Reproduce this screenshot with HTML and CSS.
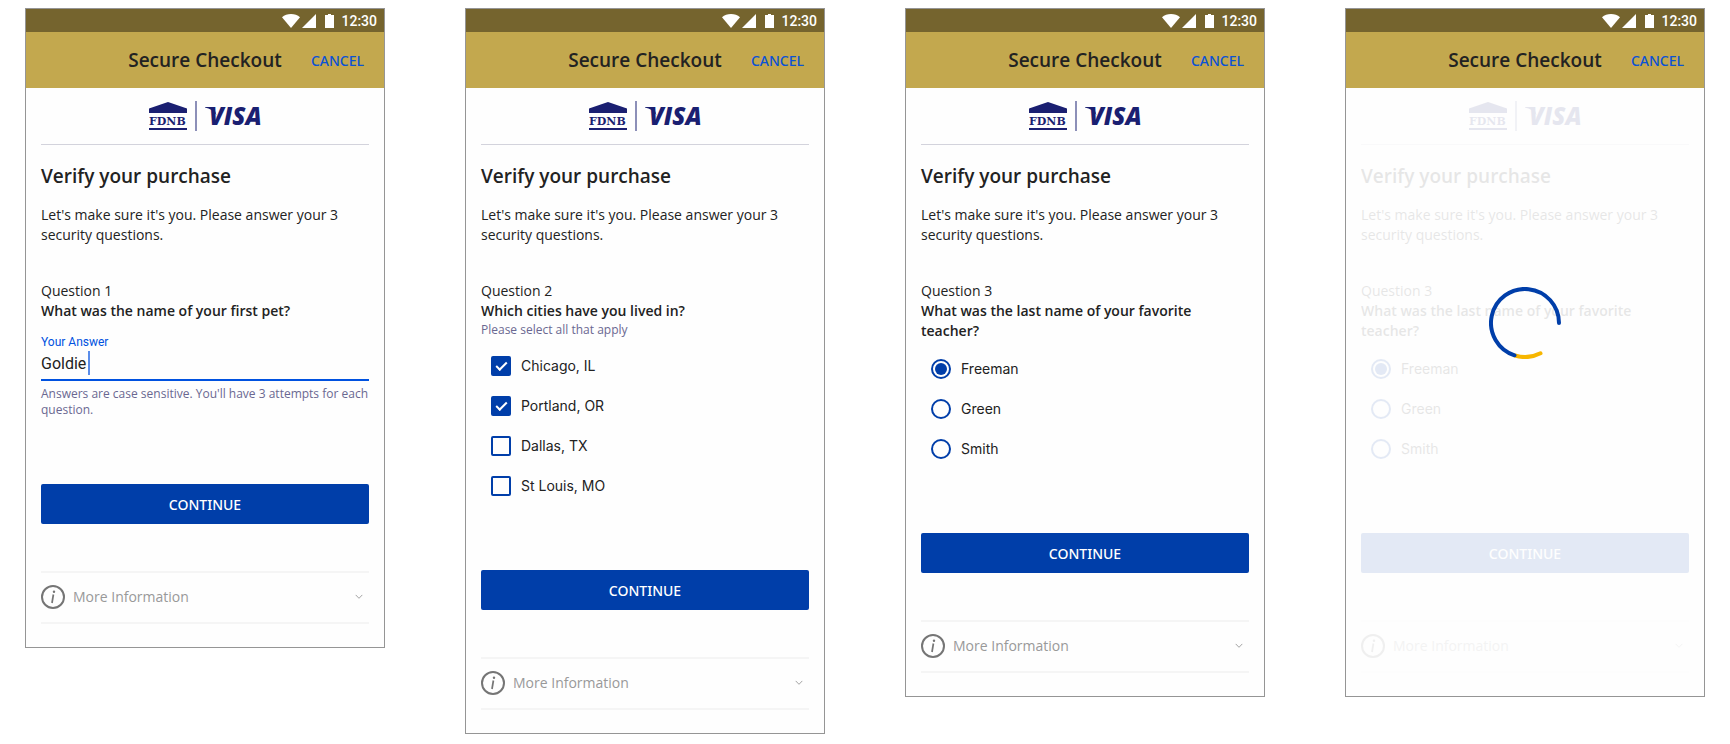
FILE: index.html
```html
<!DOCTYPE html>
<html lang="en">
<head>
  <meta charset="UTF-8" />
  <meta name="viewport" content="width=device-width, initial-scale=1.0"/>
  <title>Secure Checkout</title>
  <link rel="stylesheet" href="styles.css">
</head>
<body>
  <!-- Shared icons -->
  <svg class="sprite" aria-hidden="true">
    <symbol id="status-icons" viewBox="0 0 52 14">
      <path d="M0 3.200C2.500 1.200 5.500 0 9 0s6.500 1.200 9 3.200L9 14z"/>
      <path d="M34 0v14H20z"/>
      <path d="M43 1h3V0h3v1h3v13h-9z"/>
    </symbol>
    <symbol id="logos" viewBox="0 0 112 30">
      <path d="M0 7.500L19 1l19 6.500V12H0z"/>
      <text class="logo-bank" x="0" y="24">FDNB</text>
      <path d="M0 27h38v2H0z"/>
      <path class="logo-line" d="M46 0h2v30h-2z"/>
      <path d="M56 6h8.500l3 8C64.500 10 61 7.600 56 6.600z"/>
      <text class="logo-visa" x="60" y="24">VISA</text>
    </symbol>
    <symbol id="info" viewBox="0 0 24 24">
      <circle cx="12" cy="12" r="11" fill="none" stroke="#757575" stroke-width="2"/>
      <path d="M12.400 9.500L11 18" fill="none" stroke="#757575" stroke-width="1.700"/>
      <circle cx="13" cy="6.700" r="1.200" fill="#757575"/>
    </symbol>
    <symbol id="chevron" viewBox="0 0 8 6">
      <path d="M.7.900L4 4.300 7.300.900" fill="none" stroke="#a3a3a3" stroke-width="1"/>
    </symbol>
  </svg>

  <main class="screens">
    <section class="phone">
      <div class="status-bar">
        <svg class="status-icons"><use href="#status-icons"/></svg>
        <span>12:30</span>
      </div>
      <header class="top-bar">
        <h1>Secure Checkout</h1>
        <button type="button" class="cancel">CANCEL</button>
      </header>
      <form class="content">
        <div class="logos"><svg><use href="#logos"/></svg></div>
        <h2>Verify your purchase</h2>
        <p class="intro">Let's make sure it's you. Please answer your 3 security questions.</p>
        <div class="question">
          <p>Question 1</p>
          <p class="question-text">What was the name of your first pet?</p>
        </div>
        <div class="field">
          <label for="answer">Your Answer</label>
          <div class="input-wrap">
            <input type="text" id="answer" value="Goldie" />
            <span class="caret"></span>
          </div>
          <p class="hint">Answers are case sensitive. You'll have 3 attempts for each question.</p>
        </div>
        <button type="button" class="continue">CONTINUE</button>
        <button type="button" class="more">
          <svg class="info"><use href="#info"/></svg>
          <span>More Information</span>
          <svg class="chevron"><use href="#chevron"/></svg>
        </button>
      </form>
    </section>

    <section class="phone">
      <div class="status-bar">
        <svg class="status-icons"><use href="#status-icons"/></svg>
        <span>12:30</span>
      </div>
      <header class="top-bar">
        <h1>Secure Checkout</h1>
        <button type="button" class="cancel">CANCEL</button>
      </header>
      <form class="content">
        <div class="logos"><svg><use href="#logos"/></svg></div>
        <h2>Verify your purchase</h2>
        <p class="intro">Let's make sure it's you. Please answer your 3 security questions.</p>
        <div class="question">
          <p>Question 2</p>
          <p class="question-text">Which cities have you lived in?</p>
          <p class="hint">Please select all that apply</p>
        </div>
        <div class="options">
          <label><input type="checkbox" checked /><span>Chicago, IL</span></label>
          <label><input type="checkbox" checked /><span>Portland, OR</span></label>
          <label><input type="checkbox" /><span>Dallas, TX</span></label>
          <label><input type="checkbox" /><span>St Louis, MO</span></label>
        </div>
        <button type="button" class="continue">CONTINUE</button>
        <button type="button" class="more">
          <svg class="info"><use href="#info"/></svg>
          <span>More Information</span>
          <svg class="chevron"><use href="#chevron"/></svg>
        </button>
      </form>
    </section>

    <section class="phone">
      <div class="status-bar">
        <svg class="status-icons"><use href="#status-icons"/></svg>
        <span>12:30</span>
      </div>
      <header class="top-bar">
        <h1>Secure Checkout</h1>
        <button type="button" class="cancel">CANCEL</button>
      </header>
      <form class="content">
        <div class="logos"><svg><use href="#logos"/></svg></div>
        <h2>Verify your purchase</h2>
        <p class="intro">Let's make sure it's you. Please answer your 3 security questions.</p>
        <div class="question">
          <p>Question 3</p>
          <p class="question-text">What was the last name of your favorite teacher?</p>
        </div>
        <div class="options">
          <label><input type="radio" name="teacher" checked /><span>Freeman</span></label>
          <label><input type="radio" name="teacher" /><span>Green</span></label>
          <label><input type="radio" name="teacher" /><span>Smith</span></label>
        </div>
        <button type="button" class="continue">CONTINUE</button>
        <button type="button" class="more">
          <svg class="info"><use href="#info"/></svg>
          <span>More Information</span>
          <svg class="chevron"><use href="#chevron"/></svg>
        </button>
      </form>
    </section>

    <!-- Answers sent, waiting for the result -->
    <section class="phone loading">
      <div class="status-bar">
        <svg class="status-icons"><use href="#status-icons"/></svg>
        <span>12:30</span>
      </div>
      <header class="top-bar">
        <h1>Secure Checkout</h1>
        <button type="button" class="cancel">CANCEL</button>
      </header>
      <form class="content">
        <div class="logos"><svg><use href="#logos"/></svg></div>
        <h2>Verify your purchase</h2>
        <p class="intro">Let's make sure it's you. Please answer your 3 security questions.</p>
        <div class="question">
          <p>Question 3</p>
          <p class="question-text">What was the last name of your favorite teacher?</p>
        </div>
        <div class="options">
          <label><input type="radio" name="teacher" checked /><span>Freeman</span></label>
          <label><input type="radio" name="teacher" /><span>Green</span></label>
          <label><input type="radio" name="teacher" /><span>Smith</span></label>
        </div>
        <button type="button" class="continue">CONTINUE</button>
        <button type="button" class="more">
          <svg class="info"><use href="#info"/></svg>
          <span>More Information</span>
          <svg class="chevron"><use href="#chevron"/></svg>
        </button>
      </form>
      <svg class="spinner" viewBox="0 0 72 72">
        <path class="spinner-yellow" d="M51.500 66.300A34 34 0 0 1 26 68.500"/>
        <path class="spinner-blue" d="M70 36A34 34 0 1 0 25.500 68.300"/>
      </svg>
    </section>
  </main>
</body>
</html>
```
FILE: styles.css
```css
* {
  box-sizing: border-box;
}
body {
  margin: 0;
  background: #fff;
  color: #222;
  font-family: "Open Sans", "Noto Sans", sans-serif;
  font-size: 14px;
  line-height: 20px;
}
h1, h2, p {
  margin: 0;
}
button {
  font-family: inherit;
  font-size: 14px;
  border: none;
  padding: 0;
  cursor: pointer;
}
.sprite {
  display: none;
}
.screens {
  display: grid;
  grid-template-columns: repeat(4, 1fr);
  align-items: start;
  gap: 80px;
  padding: 8px 25px;
}
.phone {
  position: relative;
  border: 1px solid #959595;
  background: #fefefe;
}

/* Header */
.status-bar {
  display: flex;
  align-items: center;
  justify-content: flex-end;
  gap: 7px;
  height: 23px;
  padding-right: 7px;
  background: #75642e;
  color: #fff;
  font-family: Roboto, sans-serif;
  font-weight: 500;
}
.status-icons {
  width: 52px;
  height: 14px;
  fill: #fff;
}
.top-bar {
  display: grid;
  grid-template-columns: 1fr auto 1fr;
  align-items: center;
  height: 56px;
  padding: 0 20px;
  background: #c3a84e;
}
.top-bar h1 {
  grid-column: 2;
  font-size: 19px;
  font-weight: 600;
  line-height: 24px;
}
.cancel {
  justify-self: end;
  background: none;
  color: #0a52d6;
  font-family: "Noto Sans", sans-serif;
  font-weight: 500;
}

/* Content */
.content {
  padding: 0 15px 23px;
}
.logos {
  display: flex;
  justify-content: center;
  height: 57px;
  padding-top: 13px;
  border-bottom: 1px solid #d3d3dc;
}
.logos svg {
  width: 112px;
  height: 30px;
  fill: #1a1f71;
}
.logo-bank {
  font-family: "DejaVu Serif", serif;
  font-size: 11px;
  font-weight: bold;
}
.logo-visa {
  font-family: "Open Sans", sans-serif;
  font-size: 24px;
  font-weight: 800;
  font-style: italic;
}
.logo-line {
  opacity: 0.5;
}
h2 {
  margin: 19px 0 17px;
  font-size: 19px;
  font-weight: 600;
  line-height: 24px;
}
.intro {
  margin-bottom: 36px;
}
.question-text {
  font-weight: 600;
}
.hint {
  padding-top: 1px;
  color: #6a6891;
  font-size: 12px;
  line-height: 16px;
}

/* Text answer */
.field {
  margin-top: 13px;
  padding-bottom: 2px;
}
.field label {
  display: block;
  color: #0052e0;
  font-family: Roboto, sans-serif;
  font-size: 12px;
  line-height: 16px;
}
.field .hint {
  margin-top: 4px;
}
.input-wrap {
  position: relative;
}
.input-wrap input {
  display: block;
  width: 100%;
  height: 31px;
  padding: 0 0 2px;
  border: none;
  border-bottom: 2px solid #0052e0;
  border-radius: 0;
  background: none;
  color: #222;
  font-family: Roboto, sans-serif;
  font-size: 16px;
  outline: none;
}
.caret {
  position: absolute;
  top: 1px;
  left: 47px;
  width: 2px;
  height: 24px;
  background: #5a8dea;
}

/* Choices */
.options {
  margin-top: 8px;
  padding-left: 10px;
}
.options label {
  display: flex;
  align-items: center;
  gap: 10px;
  height: 40px;
  font-family: Inter, sans-serif;
}
.options input {
  appearance: none;
  display: grid;
  place-content: center;
  width: 20px;
  height: 20px;
  margin: 0;
  border: 2px solid #003ea9;
  border-radius: 2px;
}
.options input[type="radio"] {
  border-radius: 50%;
}
.options input[type="radio"]:checked::before {
  content: "";
  width: 12px;
  height: 12px;
  border-radius: 50%;
  background: #003ea9;
}
.options input[type="checkbox"]:checked {
  background: #003ea9;
}
.options input[type="checkbox"]:checked::before {
  content: "";
  width: 9px;
  height: 4px;
  border-left: 2px solid #fff;
  border-bottom: 2px solid #fff;
  transform: translateY(-1px) rotate(-45deg);
}

/* Footer */
.continue {
  display: block;
  width: 100%;
  height: 40px;
  margin: 64px 0 47px;
  border-radius: 2px;
  background: #003ea9;
  color: #fff;
  font-family: "Noto Sans", sans-serif;
  font-weight: 500;
}
.more {
  display: flex;
  align-items: center;
  gap: 8px;
  width: 100%;
  height: 53px;
  padding: 0 6px 2px 0;
  border-top: 2px solid #f5f5f5;
  border-bottom: 2px solid #f5f5f5;
  background: none;
  color: #999;
}
.info {
  width: 24px;
  height: 24px;
}
.chevron {
  width: 8px;
  height: 6px;
  margin-left: auto;
}

/* Loading */
.loading .content {
  opacity: 0.1;
}
.spinner {
  position: absolute;
  top: 278px;
  left: calc(50% - 36px);
  width: 72px;
  height: 72px;
  fill: none;
  stroke-width: 4;
  stroke-linecap: round;
}
.spinner-blue {
  stroke: #003ea9;
}
.spinner-yellow {
  stroke: #f7b600;
}
```
